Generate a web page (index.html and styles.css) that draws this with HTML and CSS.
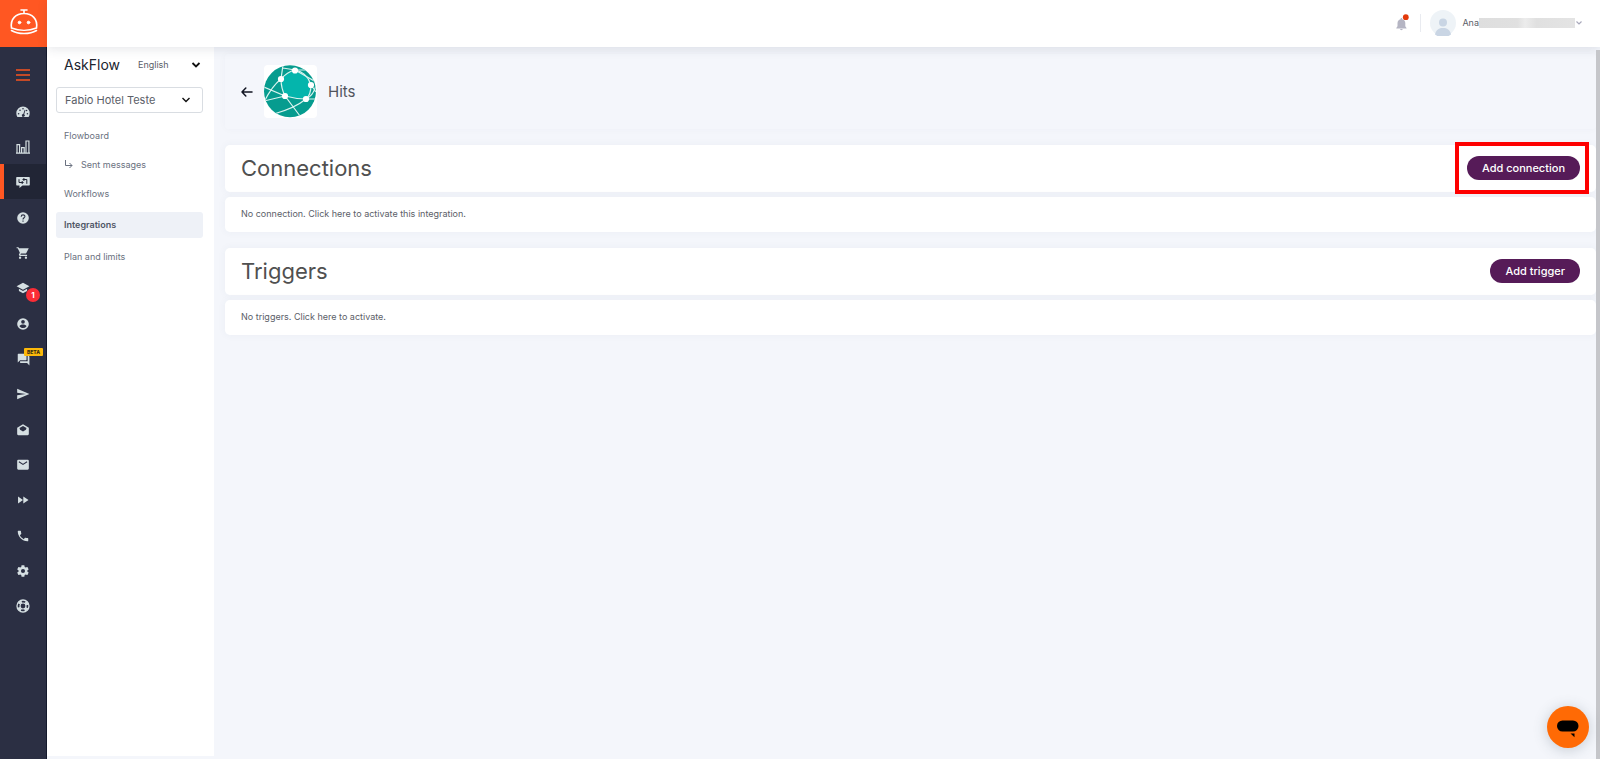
FILE: index.html
```html
<!DOCTYPE html>
<html lang="en">
<head>
<meta charset="utf-8">
<title>AskFlow - Hits</title>
<link rel="stylesheet" href="styles.css">
</head>
<body>
<div class="app">
  <nav class="rail" aria-label="Main">
    <a class="logo" href="#" aria-label="Home">
      <svg width="30" height="28" viewBox="0 0 30 28" fill="none" stroke="#fff" stroke-width="1.6" stroke-linecap="round" stroke-linejoin="round"><path d="M12 2h6M15 2v3M2.500 20C1 11 7 5.500 15 5.500S29 11 27.500 20C20 23 10 23 2.500 20zM2.500 22.500C9 26.500 21 26.500 27.500 22.500" /><circle cx="10.500" cy="14.500" r="1.300" fill="#fff" stroke-width="1"/><circle cx="19.500" cy="14.500" r="1.300" fill="#fff" stroke-width="1"/></svg>
    </a>
    <button class="burger" type="button" aria-label="Toggle menu">
      <svg width="14" height="12" viewBox="0 0 14 12" stroke="#f9541f" stroke-width="1.500"><path d="M0 1h14M0 6h14M0 11h14"/></svg>
    </button>
    <div class="rail-groups">
      <div class="rail-group">
        <a class="rail-link" href="#" aria-label="Dashboard"><svg width="14" height="14" viewBox="0 0 14 14"><path fill="currentColor" d="M7 1.500a6.700 6.700 0 0 0-6.700 6.700c0 1.400.4 2.700 1.100 3.800h11.200a6.700 6.700 0 0 0 1.100-3.800A6.700 6.700 0 0 0 7 1.500z"/><g fill="#2b2f43"><circle cx="2.600" cy="8.700" r=".8"/><circle cx="4" cy="5.300" r=".8"/><circle cx="7" cy="3.800" r=".8"/><circle cx="11.400" cy="8.700" r=".8"/><circle cx="10.600" cy="5.500" r=".8"/><path d="M8.700 4.800l.8.200-1.300 4.200a1.500 1.500 0 1 1-.9-.3z"/></g></svg></a>
        <a class="rail-link" href="#" aria-label="Statistics"><svg width="14" height="14" viewBox="0 0 14 14" fill="none" stroke="currentColor" stroke-width="1.200"><path d="M1 4.600h2.600v8.400H1zM5.600 7.600h2.600V13H5.600zM10 1h2.900v12H10zM0 13.100h14"/></svg></a>
        <a class="rail-link is-active" href="#" aria-label="AskFlow"><svg width="14" height="14" viewBox="0 0 14 14"><path fill="currentColor" d="M1.200 2h11.600c.7 0 1 .4 1 1v6.500c0 .6-.4 1-1 1H6.500L3.500 13v-2.500H1.200c-.7 0-1-.4-1-1V3c0-.6.300-1 1-1z"/><path fill="none" stroke="#212535" stroke-width="1" d="M3 4.200v3.300h4M5.700 6L7.200 7.500 5.700 9M10.800 8.800V4.500H7M8.400 3L6.900 4.500 8.400 6"/></svg></a>
      </div>
      <div class="rail-group">
        <a class="rail-link" href="#" aria-label="Help"><svg width="14" height="14" viewBox="0 0 14 14"><circle cx="7" cy="7" r="5.800" fill="currentColor"/><path fill="none" stroke="#2b2f43" stroke-width="1.100" d="M5.200 5.700c0-2.500 3.700-2.400 3.700-.2C8.900 6.800 7 6.800 7 8.500M7 9.500v1.200"/></svg></a>
        <a class="rail-link" href="#" aria-label="Shop"><svg width="14" height="14" viewBox="0 0 24 24"><path fill="currentColor" d="M7 18a2 2 0 1 0 0 4 2 2 0 0 0 0-4zM1 2v2h2l3.600 7.600-1.400 2.400C4.500 15.400 5.500 17 7 17h12v-2H7.400l1.100-2h7.500c.7 0 1.400-.4 1.700-1L21.900 4H5.200l-.9-2zM17 18a2 2 0 1 0 0 4 2 2 0 0 0 0-4z"/></svg></a>
        <a class="rail-link" href="#" aria-label="Academy, 1 new"><svg width="14" height="14" viewBox="0 0 24 24"><path fill="currentColor" d="M5 13.200v4L12 21l7-3.800v-4L12 17zM12 3L1 9l11 6 11-6z"/></svg><span class="badge count">1</span></a>
      </div>
      <div class="rail-group">
        <a class="rail-link" href="#" aria-label="Profile"><svg width="14" height="14" viewBox="0 0 24 24"><path fill="currentColor" fill-rule="evenodd" d="M12 2a10 10 0 1 0 0 20 10 10 0 0 0 0-20zm0 3a3.200 3.200 0 1 1 0 6.400A3.200 3.200 0 0 1 12 5zm0 14c-2.500 0-4.700-1.300-6-3.200 0-2 4-3.100 6-3.100s6 1.100 6 3.100A7.200 7.200 0 0 1 12 19z"/></svg></a>
        <a class="rail-link" href="#" aria-label="Chat, beta"><svg width="14" height="14" viewBox="0 0 24 24"><path fill="currentColor" d="M22 7h-2v9H7v2c0 .6.400 1 1 1h11l4 4V8c0-.6-.4-1-1-1zm-4 6V4c0-.6-.4-1-1-1H4c-.6 0-1 .4-1 1v14l4-4h10c.6 0 1-.4 1-1z"/></svg><span class="badge beta">BETA</span></a>
        <a class="rail-link" href="#" aria-label="Send"><svg width="14" height="14" viewBox="0 0 24 24"><path fill="currentColor" d="M2 21l21-9L2 3v7l15 2-15 2z"/></svg></a>
      </div>
      <div class="rail-group">
        <a class="rail-link" href="#" aria-label="Drafts"><svg width="14" height="14" viewBox="0 0 24 24"><path fill="currentColor" d="M2 8l10-6 10 6v11c0 1-1 2-2 2H4c-1 0-2-1-2-2z"/><path fill="#2b2f43" d="M6 8.500L12 5l6 3.500-1 3-5 3-5-3z"/></svg></a>
        <a class="rail-link" href="#" aria-label="Mail"><svg width="14" height="14" viewBox="0 0 24 24"><rect x="2" y="3" width="20" height="17" rx="2" fill="currentColor"/><path fill="none" stroke="#2b2f43" stroke-width="1.800" d="M5 6.500l7 4.500 7-4.500"/></svg></a>
        <a class="rail-link" href="#" aria-label="Forward"><svg width="14" height="14" viewBox="0 0 24 24"><path fill="currentColor" d="M3.500 18l8.500-6-8.500-6zM12.500 6v12l9-6z"/></svg></a>
      </div>
      <div class="rail-group">
        <a class="rail-link" href="#" aria-label="Phone"><svg width="14" height="14" viewBox="0 0 24 24"><path fill="currentColor" d="M6.600 10.800c1.400 2.800 3.800 5.100 6.600 6.600l2.200-2.200c.3-.3.700-.4 1-.2 1.100.4 2.300.6 3.600.6.600 0 1 .4 1 1V20c0 .6-.4 1-1 1C10.600 21 3 13.400 3 4c0-.6.400-1 1-1h3.500c.6 0 1 .4 1 1 0 1.200.2 2.400.6 3.600.1.300 0 .7-.2 1z"/></svg></a>
        <a class="rail-link" href="#" aria-label="Settings"><svg width="14" height="14" viewBox="0 0 24 24"><path fill="currentColor" fill-rule="evenodd" d="M19.400 13a7.800 7.800 0 0 0 0-2l2.100-1.600c.2-.2.200-.4.100-.6l-2-3.500c-.1-.2-.4-.3-.6-.2l-2.500 1a7 7 0 0 0-1.700-1l-.4-2.700c0-.2-.2-.4-.5-.4h-4c-.2 0-.4.200-.5.400L9 5.100a7 7 0 0 0-1.700 1l-2.500-1c-.2-.1-.5 0-.6.200l-2 3.500c-.1.200-.1.500.1.600L4.500 11a7.800 7.800 0 0 0 0 2l-2.200 1.600c-.2.200-.2.400-.1.600l2 3.500c.1.200.4.300.6.200l2.500-1a7 7 0 0 0 1.700 1l.4 2.700c0 .2.200.4.500.4h4c.2 0 .4-.2.500-.4l.4-2.700a7 7 0 0 0 1.700-1l2.500 1c.2.100.5 0 .6-.2l2-3.500c.1-.2.100-.5-.1-.6zM12 15.500a3.500 3.500 0 1 1 0-7 3.500 3.500 0 0 1 0 7z"/></svg></a>
        <a class="rail-link" href="#" aria-label="Support"><svg width="14" height="14" viewBox="0 0 14 14" fill="none" stroke="currentColor"><circle cx="7" cy="7" r="6" stroke-width="1.300"/><circle cx="7" cy="7" r="3" stroke-width="1.200"/><circle cx="7" cy="7" r="4.500" stroke-width="2.600" stroke-dasharray="3.500 3.570" stroke-dashoffset="-1.780"/></svg></a>
      </div>
    </div>
  </nav>

  <div class="page">
    <header class="topbar">
      <button class="bell" type="button" aria-label="Notifications">
        <svg width="14" height="17" viewBox="0 0 14 17"><path fill="#b5b5c3" d="M5.500 5.200c0-1.600 1.800-1.600 1.800 0 2 .5 3 2 3 4v3l1.200 1.800v.5H1.300V14l1.200-1.800v-3c0-2 1-3.500 3-4zM5 15h2.800c-.2 1.500-2.600 1.500-2.800 0z"/><circle cx="10.800" cy="3.200" r="2.900" fill="#e33a0b"/></svg>
      </button>
      <button class="account" type="button" aria-label="Account menu">
        <svg class="avatar" width="26" height="26" viewBox="0 0 26 26"><circle cx="13" cy="13" r="13" fill="#eef3f7"/><circle cx="13" cy="12.500" r="4" fill="#c9d5e4"/><path fill="#c9d5e4" d="M5 24.500c1-5 4-6.500 8-6.500s7 1.500 8 6.500a13 13 0 0 1-16 0z"/></svg>
        <span class="user-name">Ana</span><span class="redacted"></span>
        <svg width="8" height="6" viewBox="0 0 8 6" fill="none" stroke="#a9a9bb" stroke-width="1.200"><path d="M1.500 1.500L4 4l2.500-2.500"/></svg>
      </button>
    </header>

    <div class="body">
      <aside class="panel">
        <div class="panel-head">
          <h2 class="panel-title">AskFlow</h2>
          <label class="select language">
            <select aria-label="Language"><option>English</option></select>
            <svg width="10" height="8" viewBox="0 0 10 8" fill="none" stroke="#111" stroke-width="1.800"><path d="M1.500 2L5 5.500 8.500 2"/></svg>
          </label>
        </div>
        <label class="select hotel">
          <select aria-label="Hotel"><option>Fabio Hotel Teste</option></select>
          <svg width="10" height="8" viewBox="0 0 10 8" fill="none" stroke="#111" stroke-width="1.400"><path d="M1.500 2L5 5.500 8.500 2"/></svg>
        </label>
        <nav class="menu" aria-label="AskFlow">
          <a class="menu-link" href="#">Flowboard</a>
          <a class="menu-link sub" href="#"><svg width="9" height="9" viewBox="0 0 9 9" fill="none" stroke="currentColor"><path d="M1.500 0v5.500H8M5.500 3L8 5.500 5.500 8"/></svg>Sent messages</a>
          <a class="menu-link" href="#">Workflows</a>
          <a class="menu-link current" href="#" aria-current="page">Integrations</a>
          <a class="menu-link" href="#">Plan and limits</a>
        </nav>
      </aside>

      <main class="content">
        <div class="intro">
          <a class="back" href="#" aria-label="Back"><svg width="12" height="10" viewBox="0 0 12 10" fill="none" stroke="#111522" stroke-width="1.500" stroke-linecap="round" stroke-linejoin="round"><path d="M11 5H1M4.800 1L1 5l3.800 4"/></svg></a>
          <svg class="brand" width="53" height="53" viewBox="0 0 53 53" role="img" aria-label="Hits logo">
            <rect width="53" height="53" rx="4" fill="#fff"/>
            <clipPath id="globe"><circle cx="26" cy="26.300" r="26"/></clipPath>
            <g clip-path="url(#globe)">
              <rect width="53" height="53" fill="#069c8f"/>
              <path fill="#04b5ac" d="M17 14Q23 7 31 5Q43 7 47 20Q47 30 42 34Q32 34 21 31Q17 23 17 14z"/>
              <g fill="none" stroke="#d9f3ef" stroke-width="1.200">
                <path d="M17 14Q23 7 31 5Q43 7 47 20Q47 30 42 34Q32 34 21 31Q17 23 17 14z"/>
                <path d="M17 14L19 0M19 3L31 5L43 5M31 5L52 17M17 14Q8 21 0 37M0 22L21 31L36 51M0 36L21 31M42 34Q31 43 10 49M42 34L53 34M47 20L52 27M42 34Q50 30 52 20"/>
              </g>
              <g fill="#fff"><circle cx="17" cy="14" r="3.100"/><circle cx="31" cy="5.500" r="3.100"/><circle cx="47" cy="20" r="3.100"/><circle cx="21" cy="31" r="3.100"/><circle cx="42" cy="34" r="3.100"/></g>
            </g>
          </svg>
          <h1 class="intro-title">Hits</h1>
        </div>

        <section class="section">
          <div class="card section-head">
            <h2 class="section-title">Connections</h2>
            <div class="marked"><button class="action" type="button">Add connection</button></div>
          </div>
          <p class="card note">No connection. Click here to activate this integration.</p>
        </section>

        <section class="section">
          <div class="card section-head">
            <h2 class="section-title">Triggers</h2>
            <button class="action" type="button">Add trigger</button>
          </div>
          <p class="card note">No triggers. Click here to activate.</p>
        </section>
      </main>
      <div class="scroll-thumb"></div>
    </div>
  </div>
  <button class="chat" type="button" aria-label="Open chat">
    <svg width="42" height="42" viewBox="0 0 42 42"><rect x="10" y="14.500" width="21.500" height="11" rx="5.500"/><path d="M23.500 27.500h4v3.700z"/></svg>
  </button>
</div>
</body>
</html>
```

FILE: styles.css
```css
* { box-sizing: border-box; }

body {
  margin: 0;
  font-family: Inter, "Liberation Sans", sans-serif;
  font-size: 9px;
  line-height: 16px;
  color: #5b6068;
  background: #f4f6fb;
}

h1, h2, p { margin: 0; font-weight: 400; }
a { color: inherit; text-decoration: none; }
button, select { font: inherit; color: inherit; border: 0; padding: 0; background: none; }
svg { display: block; flex: none; }

.app { display: flex; min-height: 100vh; }

.rail {
  flex: none;
  width: 47px;
  background: #2b2f43;
  border-right: 1px solid #14192c;
}
.logo {
  display: flex;
  align-items: center;
  justify-content: center;
  height: 47px;
  margin-right: -1px;
  padding-bottom: 4px;
  background: #ff5722;
}
.burger { display: flex; justify-content: center; width: 100%; padding: 22px 0 13px; }
.rail-groups { display: flex; flex-direction: column; gap: 1px; color: #d5dfe2; }
.rail-link {
  position: relative;
  display: flex;
  align-items: center;
  justify-content: center;
  height: 35px;
}
.rail-link.is-active { background: #212535; box-shadow: inset 4px 0 #ff5722; }
.badge { position: absolute; }
.count {
  top: 18px;
  left: 26px;
  z-index: 1;
  width: 14px;
  border-radius: 7px;
  background: #fb2c36;
  color: #fff;
  font-size: 8px;
  font-weight: 700;
  line-height: 14px;
  text-align: center;
}
.beta {
  top: 7px;
  left: 24px;
  width: 19px;
  border-radius: 1px;
  background: #fcb90a;
  color: #3a2d10;
  font-size: 5px;
  font-weight: 800;
  line-height: 8px;
  text-align: center;
}

.page { flex: 1; display: flex; flex-direction: column; min-width: 0; }

.topbar {
  position: relative;
  z-index: 1;
  display: flex;
  align-items: center;
  justify-content: flex-end;
  height: 47px;
  padding: 0 17px 2px 0;
  background: #fff;
  box-shadow: 0 2px 10px rgba(50, 55, 80, .12);
}
.bell { margin-right: 11px; }
.account { display: flex; align-items: center; padding-left: 10px; position: relative; }
.account::before { content: ""; position: absolute; left: 0; top: 4px; bottom: 4px; width: 1px; background: #e9ebf0; }
.avatar { margin-right: 6px; }
.redacted { width: 96px; height: 10px; background: linear-gradient(90deg, #dedede, #e0e0e0 40%, #ececec 48%, #e0e0e0 60%, #e4e4e4); }

.body { flex: 1; display: flex; }

.panel {
  flex: none;
  width: 167px;
  margin-bottom: 3px;
  padding: 10px 11px 0 9px;
  background: #fff;
}
.panel-head { display: flex; align-items: center; justify-content: space-between; padding: 0 2px 0 8px; }
.panel-title { font-size: 14px; color: #20242e; }
.select { position: relative; display: flex; align-items: center; }
.select select { appearance: none; width: 100%; cursor: pointer; }
.select svg { position: absolute; right: 0; pointer-events: none; }
.language { width: 63px; }
.hotel { height: 26px; margin-top: 14px; padding: 0 11px 0 8px; border: 1px solid #d9dde2; border-radius: 3px; }
.hotel select { font-size: 11px; }
.hotel svg { right: 11px; }

.menu { display: flex; flex-direction: column; padding-top: 8px; color: #6a7180; }
.menu-link { display: flex; align-items: center; height: 29px; padding: 0 8px; border-radius: 3px; }
.menu-link.sub { gap: 8px; }
.menu-link.current { height: 26px; margin: 4px 0; background: #eef1f7; color: #4f5666; font-weight: 600; }

.content { flex: 1; min-width: 0; padding: 7px 0 0 11px; }
.intro {
  display: flex;
  align-items: center;
  height: 75px;
  padding: 0 16px;
  border-radius: 4px;
  box-shadow: 0 0 8px rgba(60, 70, 110, .03);
}
.brand { margin-left: 11px; }
.intro-title { margin-left: 11px; font-size: 15px; color: #50545c; }
.section { margin-top: 16px; }
.card { background: #fff; border-radius: 5px; box-shadow: 0 0 8px rgba(60, 70, 110, .05); }
.section-head { display: flex; align-items: center; justify-content: space-between; height: 47px; padding: 0 16px 2px; }
.section-title { font-size: 22px; line-height: 28px; color: #505050; }
.action {
  height: 24px;
  padding: 0 15px;
  border-radius: 12px;
  background: #561b58;
  color: #fff;
  font-size: 11px;
  font-weight: 500;
}
.marked { position: relative; display: flex; }
.marked::after {
  content: "";
  position: absolute;
  inset: -14px -9px -14px -12px;
  border: 4px solid #fe0000;
  pointer-events: none;
}
.note { margin-top: 5px; padding: 9px 16px 10px; }

.scroll-thumb { flex: none; width: 4px; margin-top: 3px; background: #c5c6ca; position: relative; z-index: 2; }

.chat {
  position: fixed;
  right: 11px;
  bottom: 11px;
  z-index: 3;
  border-radius: 50%;
  background: #ff6a05;
  box-shadow: 0 2px 14px rgba(60, 80, 90, .25);
}
```
